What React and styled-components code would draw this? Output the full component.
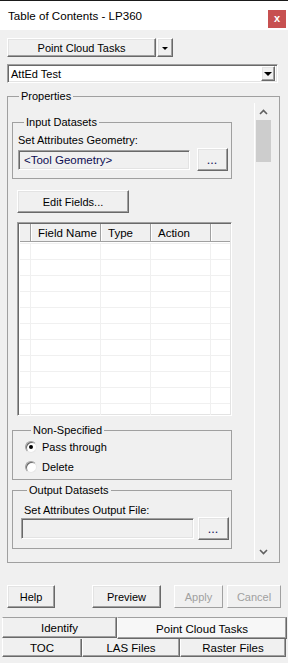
import React from "react";
import styled, { createGlobalStyle, css } from "styled-components";

const Global = createGlobalStyle`
  html, body { margin: 0; padding: 0; background: #f0f0f0; }
  body { font-family: "Liberation Sans", Arial, sans-serif; font-size: 11px; color: #000; }
  * { box-sizing: border-box; }
`;

const raised = css`
  border: 1px solid;
  border-color: #ffffff #696969 #696969 #ffffff;
  box-shadow: inset -1px -1px 0 #a0a0a0, inset 1px 1px 0 #e3e3e3;
  background: #f0f0f0;
`;

const sunken = css`
  border: 1px solid;
  border-color: #a0a0a0 #ffffff #ffffff #a0a0a0;
  box-shadow: inset 1px 1px 0 #696969, inset -1px -1px 0 #e3e3e3;
`;

const Window = styled.div`
  width: 288px;
  height: 663px;
  display: flex;
  flex-direction: column;
  background: #f0f0f0;
  border-top: 1px solid #1a1a1a;
  overflow: hidden;
`;

const TitleBar = styled.div`
  height: 29px;
  flex: none;
  background: #ffffff;
  display: flex;
  align-items: center;
  justify-content: space-between;
  padding: 0 2px 0 8px;
`;

const Title = styled.span`
  font-size: 11.6px;
  margin-top: -1px;
`;

const CloseButton = styled.div`
  width: 18px;
  height: 18px;
  background: #c75050;
  color: #fff;
  font-weight: bold;
  font-size: 11px;
  display: flex;
  align-items: center;
  justify-content: center;
  margin-top: 7px;
  line-height: 1;
  padding-bottom: 2px;
`;

const Body = styled.div`
  padding: 8px 0 0 7px;
  display: flex;
  flex-direction: column;
`;

const TaskRow = styled.div`
  display: flex;
  gap: 1px;
`;

const Button = styled.div`
  ${raised};
  height: ${(p) => p.$h || 23}px;
  width: ${(p) => p.$w}px;
  margin-left: ${(p) => p.$ml || 0}px;
  display: flex;
  align-items: center;
  justify-content: center;
  color: ${(p) => (p.$disabled ? "#a0a0a0" : "#000")};
  flex: none;
  ${(p) =>
    p.$disabled &&
    css`
      border-color: #ffffff #a0a0a0 #a0a0a0 #ffffff;
      box-shadow: none;
    `}
`;

const Arrow = styled.span`
  width: 0;
  height: 0;
  border-left: ${(p) => p.$s || 3}px solid transparent;
  border-right: ${(p) => p.$s || 3}px solid transparent;
  border-top: ${(p) => p.$s || 3}px solid #000;
  margin-top: 1px;
`;

const Combo = styled.div`
  ${sunken};
  background: #fff;
  margin-top: 7px;
  width: 271px;
  height: 19px;
  display: flex;
  align-items: center;
  justify-content: space-between;
  padding: 0 2px 0 3px;
`;

const ComboButton = styled.div`
  ${raised};
  width: 14px;
  height: 15px;
  display: flex;
  align-items: center;
  justify-content: center;
`;

const Group = styled.fieldset`
  margin: ${(p) => p.$mt || 0}px 0 0 0;
  padding: 0 ${(p) => p.$pr || 0}px ${(p) => p.$pb || 0}px ${(p) => p.$pl || 0}px;
  border: 1px solid #a0a0a0;
  min-width: 0;
  width: ${(p) => p.$w}px;
`;

const Legend = styled.legend`
  margin-left: ${(p) => p.$ml || 7}px;
  padding: 0 2px;
  line-height: 13px;
  font-size: 11px;
`;

const PropsInner = styled.div`
  display: flex;
  padding: 0 0 2px 4px;
  height: 459px;
`;

const Column = styled.div`
  width: 220px;
  display: flex;
  flex-direction: column;
`;

const Scrollbar = styled.div`
  margin-left: 22px;
  width: 17px;
  height: 457px;
  border-left: 1px solid #fff;
  display: flex;
  flex-direction: column;
  align-items: center;
`;

const ScrollArrow = styled.div`
  height: 17px;
  width: 16px;
  display: flex;
  align-items: center;
  justify-content: center;
`;

const Thumb = styled.div`
  width: 15px;
  height: 42px;
  background: #cdcdcd;
`;

const Spacer = styled.div`
  flex: 1;
`;

const Label = styled.div`
  line-height: 13px;
  margin-top: ${(p) => p.$mt || 0}px;
  margin-left: ${(p) => p.$ml || 0}px;
`;

const FileRow = styled.div`
  display: flex;
  align-items: center;
  gap: ${(p) => p.$gap || 0}px;
  margin-top: ${(p) => p.$mt || 0}px;
  padding-left: ${(p) => p.$pl || 0}px;
`;

const TextBox = styled.div`
  ${sunken};
  width: 173px;
  height: ${(p) => p.$h || 20}px;
  background: #f0f0f0;
  color: #0c0c52;
  display: flex;
  align-items: center;
  padding-left: 5px;
  font-size: 11.5px;
`;

const Dots = styled.span`
  letter-spacing: 1px;
  margin-top: 2px;
  font-weight: bold;
  font-size: 9px;
  color: #202060;
`;

const Grid = styled.div`
  ${sunken};
  background: #fff;
  width: 216px;
  height: 194px;
  display: flex;
  flex-direction: column;
  padding: 1px 1px 0 2px;
  overflow: hidden;
`;

const cols = [11, 70, 50, 60, 23];

const HeaderRow = styled.div`
  display: flex;
  height: 18px;
  flex: none;
  background: #f0f0f0;
  border-bottom: 1px solid #a0a0a0;
`;

const HeaderCell = styled.div`
  width: ${(p) => p.$w}px;
  flex: none;
  padding-left: ${(p) => (p.$first ? 0 : 6)}px;
  display: flex;
  align-items: center;
  border-right: ${(p) => (p.$last ? "none" : "1px solid #a0a0a0")};
  border-left: ${(p) => (p.$first ? "none" : "1px solid #fff")};
  font-size: 11.5px;
`;

const GridRow = styled.div`
  display: flex;
  height: 16px;
  flex: none;
  border-top: 1px solid #f0f0f0;
  margin-top: ${(p) => (p.$first ? 1 : 0)}px;
`;

const GridCell = styled.div`
  width: ${(p) => p.$w}px;
  flex: none;
  border-right: ${(p) => (p.$last ? "none" : "1px solid #f0f0f0")};
`;

const RadioRow = styled.div`
  display: flex;
  align-items: center;
  height: 20px;
  gap: 5px;
`;

const Radio = styled.span`
  width: 12px;
  height: 12px;
  border-radius: 50%;
  background: #fff;
  border: 1px solid;
  border-color: #a0a0a0 #e8e8e8 #e8e8e8 #a0a0a0;
  box-shadow: inset 1px 1px 0 #696969;
  display: flex;
  align-items: center;
  justify-content: center;
  &::after {
    content: "";
    width: 4px;
    height: 4px;
    border-radius: 50%;
    background: ${(p) => (p.$checked ? "#000" : "transparent")};
  }
`;

const ActionRow = styled.div`
  display: flex;
  margin-top: 22px;
`;

const Tabs = styled.div`
  margin-top: 9px;
  padding-left: 2px;
  display: flex;
  flex-direction: column;
`;

const TabRow = styled.div`
  display: flex;
`;

const Tab = styled.div`
  width: ${(p) => p.$w}px;
  height: ${(p) => p.$h}px;
  flex: none;
  display: flex;
  align-items: center;
  justify-content: center;
  border-left: 1px solid #fff;
  border-right: 1px solid #696969;
  border-bottom: 1px solid #696969;
  border-top: ${(p) => (p.$top ? "1px solid #a0a0a0" : "none")};
  box-shadow: inset -1px -1px 0 #a0a0a0;
  background: ${(p) => (p.$selected ? "#f7f7f7" : "#f0f0f0")};
  padding-top: ${(p) => (p.$selected ? 2 : 0)}px;
  font-size: 11.5px;
`;

export default function App() {
  const rows = Array.from({ length: 11 });
  return (
    <>
      <Global />
      <Window>
        <TitleBar>
          <Title>Table of Contents - LP360</Title>
          <CloseButton>x</CloseButton>
        </TitleBar>
        <Body>
          <TaskRow>
            <Button $w={149} $h={19}>Point Cloud Tasks</Button>
            <Button $w={16} $h={19}>
              <Arrow $s={3} />
            </Button>
          </TaskRow>
          <Combo>
            <span>AttEd Test</span>
            <ComboButton>
              <Arrow $s={4} />
            </ComboButton>
          </Combo>
          <Group $mt={7} $w={273}>
            <Legend $ml={11}>Properties</Legend>
            <PropsInner>
              <Column>
                <Group $mt={13} $w={220} $pl={5} $pr={3} $pb={7}>
                  <Legend $ml={6}>Input Datasets</Legend>
                  <Label $mt={5}>Set Attributes Geometry:</Label>
                  <FileRow $gap={7} $mt={1}>
                    <TextBox>&lt;Tool Geometry&gt;</TextBox>
                    <Button $w={31} $h={23}>
                      <Dots>...</Dots>
                    </Button>
                  </FileRow>
                </Group>
                <FileRow $mt={11} $pl={5}>
                  <Button $w={112} $h={23}>Edit Fields...</Button>
                </FileRow>
                <FileRow $mt={9} $pl={5}>
                  <Grid>
                    <HeaderRow>
                      {["", "Field Name", "Type", "Action", ""].map((t, i) => (
                        <HeaderCell
                          key={i}
                          $w={cols[i]}
                          $first={i === 0}
                          $last={i === 4}
                        >
                          {t}
                        </HeaderCell>
                      ))}
                    </HeaderRow>
                    {rows.map((_, r) => (
                      <GridRow key={r} $first={r === 0}>
                        {cols.map((w, i) => (
                          <GridCell key={i} $w={w} $last={i === 4} />
                        ))}
                      </GridRow>
                    ))}
                  </Grid>
                </FileRow>
                <Group $mt={8} $w={220} $pl={12} $pb={2}>
                  <Legend $ml={6}>Non-Specified</Legend>
                  <RadioRow>
                    <Radio $checked />
                    <span>Pass through</span>
                  </RadioRow>
                  <RadioRow>
                    <Radio />
                    <span>Delete</span>
                  </RadioRow>
                </Group>
                <Group $mt={4} $w={220} $pl={8} $pb={8}>
                  <Legend $ml={6}>Output Datasets</Legend>
                  <Label $mt={7} $ml={3}>Set Attributes Output File:</Label>
                  <FileRow $gap={4}>
                    <TextBox $h={21} />
                    <Button $w={31} $h={23}>
                      <Dots>...</Dots>
                    </Button>
                  </FileRow>
                </Group>
              </Column>
              <Scrollbar>
                <ScrollArrow>
                  <svg width="9" height="6" viewBox="0 0 9 6">
                    <path d="M1 5 L4.5 1.5 L8 5" fill="none" stroke="#606060" strokeWidth="1.6" />
                  </svg>
                </ScrollArrow>
                <Thumb />
                <Spacer />
                <ScrollArrow>
                  <svg width="9" height="6" viewBox="0 0 9 6">
                    <path d="M1 1 L4.5 4.5 L8 1" fill="none" stroke="#606060" strokeWidth="1.6" />
                  </svg>
                </ScrollArrow>
              </Scrollbar>
            </PropsInner>
          </Group>
          <ActionRow>
            <Button $w={48} $h={23}>Help</Button>
            <Button $w={69} $h={23} $ml={37}>Preview</Button>
            <Button $w={49} $h={23} $ml={13} $disabled>Apply</Button>
            <Button $w={54} $h={23} $ml={4} $disabled>Cancel</Button>
          </ActionRow>
        </Body>
        <Tabs>
          <TabRow>
            <Tab $w={115} $h={21} $top>Identify</Tab>
            <Tab $w={170} $h={22} $top $selected>Point Cloud Tasks</Tab>
          </TabRow>
          <TabRow>
            <Tab $w={80} $h={18}>TOC</Tab>
            <Tab $w={98} $h={18}>LAS Files</Tab>
            <Tab $w={106} $h={18}>Raster Files</Tab>
          </TabRow>
        </Tabs>
      </Window>
    </>
  );
}
